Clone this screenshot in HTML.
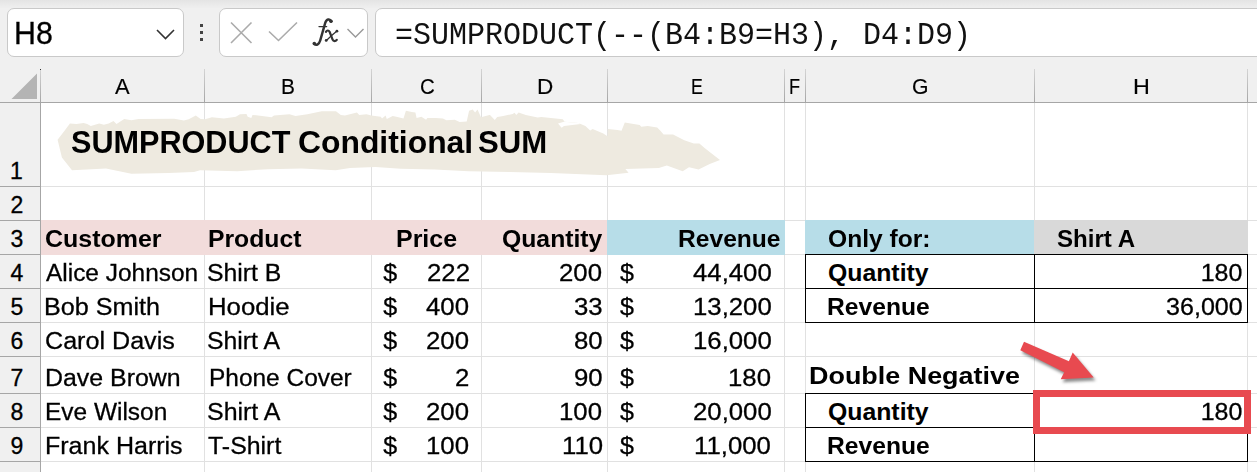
<!DOCTYPE html>
<html><head><meta charset="utf-8"><style>
html,body{margin:0;padding:0;}
body{width:1257px;height:472px;overflow:hidden;position:relative;background:#fff;font-family:'Liberation Sans', sans-serif;}
.t{position:absolute;white-space:nowrap;}
.r{position:absolute;}
.box{background:#fff;border:1px solid #c9c9c9;border-radius:7px;}
</style></head><body>
<div class="r" style="left:0px;top:0px;width:1257px;height:102px;background:#f0f0f0;"></div>
<div class="r" style="left:0px;top:0px;width:1257px;height:8px;background:linear-gradient(#e4e4e4,#efefef);"></div>
<div class="r" style="left:0px;top:102px;width:40px;height:370px;background:#f0f0f0;"></div>
<div class="r" style="left:204px;top:103px;width:1px;height:369px;background:#e1e1e1;"></div>
<div class="r" style="left:371px;top:103px;width:1px;height:369px;background:#e1e1e1;"></div>
<div class="r" style="left:481px;top:103px;width:1px;height:369px;background:#e1e1e1;"></div>
<div class="r" style="left:607px;top:103px;width:1px;height:369px;background:#e1e1e1;"></div>
<div class="r" style="left:784px;top:103px;width:1px;height:369px;background:#e1e1e1;"></div>
<div class="r" style="left:805px;top:103px;width:1px;height:369px;background:#e1e1e1;"></div>
<div class="r" style="left:1034px;top:103px;width:1px;height:369px;background:#e1e1e1;"></div>
<div class="r" style="left:1247px;top:103px;width:1px;height:369px;background:#e1e1e1;"></div>
<div class="r" style="left:41px;top:186px;width:1216px;height:1px;background:#e1e1e1;"></div>
<div class="r" style="left:41px;top:220px;width:1216px;height:1px;background:#e1e1e1;"></div>
<div class="r" style="left:41px;top:254px;width:1216px;height:1px;background:#e1e1e1;"></div>
<div class="r" style="left:41px;top:288px;width:1216px;height:1px;background:#e1e1e1;"></div>
<div class="r" style="left:41px;top:322px;width:1216px;height:1px;background:#e1e1e1;"></div>
<div class="r" style="left:41px;top:356px;width:1216px;height:1px;background:#e1e1e1;"></div>
<div class="r" style="left:41px;top:393px;width:1216px;height:1px;background:#e1e1e1;"></div>
<div class="r" style="left:41px;top:427px;width:1216px;height:1px;background:#e1e1e1;"></div>
<div class="r" style="left:41px;top:461px;width:1216px;height:1px;background:#e1e1e1;"></div>
<div class="r" style="left:41px;top:220px;width:566px;height:35px;background:#f2dcdb;"></div>
<div class="r" style="left:607px;top:220px;width:178px;height:35px;background:#b7dde8;"></div>
<div class="r" style="left:805px;top:220px;width:229px;height:34px;background:#b7dde8;"></div>
<div class="r" style="left:1034px;top:220px;width:214px;height:34px;background:#d9d9d9;"></div>
<div class="r" style="left:40px;top:69px;width:1px;height:33px;background:linear-gradient(#d4d4d4,#a6a6a6);"></div>
<div class="r" style="left:204px;top:69px;width:1px;height:33px;background:linear-gradient(#d4d4d4,#a6a6a6);"></div>
<div class="r" style="left:371px;top:69px;width:1px;height:33px;background:linear-gradient(#d4d4d4,#a6a6a6);"></div>
<div class="r" style="left:481px;top:69px;width:1px;height:33px;background:linear-gradient(#d4d4d4,#a6a6a6);"></div>
<div class="r" style="left:607px;top:69px;width:1px;height:33px;background:linear-gradient(#d4d4d4,#a6a6a6);"></div>
<div class="r" style="left:784px;top:69px;width:1px;height:33px;background:linear-gradient(#d4d4d4,#a6a6a6);"></div>
<div class="r" style="left:805px;top:69px;width:1px;height:33px;background:linear-gradient(#d4d4d4,#a6a6a6);"></div>
<div class="r" style="left:1034px;top:69px;width:1px;height:33px;background:linear-gradient(#d4d4d4,#a6a6a6);"></div>
<div class="r" style="left:1247px;top:69px;width:1px;height:33px;background:linear-gradient(#d4d4d4,#a6a6a6);"></div>
<div class="r" style="left:40px;top:102px;width:1px;height:370px;background:#a6a6a6;"></div>
<div class="r" style="left:0px;top:102px;width:1257px;height:1px;background:#a6a6a6;"></div>
<div class="r" style="left:0px;top:186px;width:40px;height:1px;background:#a6a6a6;"></div>
<div class="r" style="left:0px;top:220px;width:40px;height:1px;background:#a6a6a6;"></div>
<div class="r" style="left:0px;top:254px;width:40px;height:1px;background:#a6a6a6;"></div>
<div class="r" style="left:0px;top:288px;width:40px;height:1px;background:#a6a6a6;"></div>
<div class="r" style="left:0px;top:322px;width:40px;height:1px;background:#a6a6a6;"></div>
<div class="r" style="left:0px;top:356px;width:40px;height:1px;background:#a6a6a6;"></div>
<div class="r" style="left:0px;top:393px;width:40px;height:1px;background:#a6a6a6;"></div>
<div class="r" style="left:0px;top:427px;width:40px;height:1px;background:#a6a6a6;"></div>
<div class="r" style="left:0px;top:461px;width:40px;height:1px;background:#a6a6a6;"></div>
<div class="r" style="left:40px;top:69px;width:1px;height:1px;background:#333;"></div>
<svg class="r" style="left:0;top:60px" width="40" height="42"><polygon points="11.5,39 37,39 37,13.5" fill="#b4b4b4"/></svg>
<div class="r box" style="left:6.5px;top:8px;width:175px;height:47px;"></div>
<div class="r box" style="left:218.5px;top:8px;width:147px;height:47px;"></div>
<div class="r box" style="left:374.5px;top:8px;width:900px;height:47px;"></div>
<div class="r" style="left:199.5px;top:23.5px;width:3.5px;height:3.5px;background:#444;"></div>
<div class="r" style="left:199.5px;top:30.5px;width:3.5px;height:3.5px;background:#444;"></div>
<div class="r" style="left:199.5px;top:37.5px;width:3.5px;height:3.5px;background:#444;"></div>
<svg class="r" style="left:150px;top:20px" width="30" height="25"><polyline points="7,10 15.5,18.5 24,10" fill="none" stroke="#333" stroke-width="1.6"/></svg>
<svg class="r" style="left:225px;top:15px" width="150" height="35"><path d="M6,7.5 L26.5,28 M26.5,7.5 L6,28" stroke="#ababab" stroke-width="1.6" fill="none"/><polyline points="44,16.5 53.5,25.5 72,7.5" fill="none" stroke="#ababab" stroke-width="1.6"/><polyline points="122.5,14 130.5,22 138.5,14" fill="none" stroke="#999" stroke-width="1.4"/></svg>
<svg class="r" style="left:0;top:0" width="400" height="60"><g fill="none" stroke="#333" stroke-linecap="round">
<path d="M331.4,21.4 C329.8,18.4 326.4,18.9 325.2,23 L320.2,40.5 C319,44.5 316.5,45.6 314.2,44" stroke-width="2.5"/>
<path d="M319,26.6 L326.6,26.6" stroke-width="1.4"/>
<path d="M325.9,31.8 C326.9,30.2 328.6,30 329.6,31.8 L332.6,39.6 C333.4,41.6 335.6,41.4 336.8,39.8" stroke-width="2.2"/>
<path d="M337,31 C333,34 329.5,37.5 326.2,40.6" stroke-width="1.3"/>
</g><g fill="#333"><circle cx="330.9" cy="21.2" r="1.8"/><circle cx="314.3" cy="43.5" r="1.8"/><circle cx="336.9" cy="31.2" r="1.4"/><circle cx="326.2" cy="40.4" r="1.4"/></g></svg>
<div class="t" style="left:13.94px;top:19.03px;font-size:29.5px;line-height:29.5px;height:29.5px;font-weight:normal;color:#000;font-family:'Liberation Sans', sans-serif;-webkit-text-stroke:0.3px #000;transform:scale(1.0294,1.0800);transform-origin:0 24.97px;">H8</div>
<div class="t" style="left:395.00px;top:21.11px;font-size:30px;line-height:30px;height:30px;font-weight:normal;color:#111;font-family:'Liberation Mono', monospace;transform:scale(1.0000,1.0300);transform-origin:0 25.39px;">=SUMPRODUCT(--(B4:B9=H3), D4:D9)</div>
<div class="t" style="left:115.10px;top:76.04px;font-size:22.4px;line-height:22.4px;height:22.4px;font-weight:normal;color:#000;font-family:'Liberation Sans', sans-serif;-webkit-text-stroke:0.15px #000;transform:scale(0.9800,1.0000);transform-origin:0 18.96px;">A</div>
<div class="t" style="left:281.23px;top:76.04px;font-size:22.4px;line-height:22.4px;height:22.4px;font-weight:normal;color:#000;font-family:'Liberation Sans', sans-serif;-webkit-text-stroke:0.15px #000;transform:scale(0.9333,1.0000);transform-origin:0 18.96px;">B</div>
<div class="t" style="left:420.09px;top:76.04px;font-size:22.4px;line-height:22.4px;height:22.4px;font-weight:normal;color:#000;font-family:'Liberation Sans', sans-serif;-webkit-text-stroke:0.15px #000;transform:scale(0.9143,1.0000);transform-origin:0 18.96px;">C</div>
<div class="t" style="left:536.78px;top:76.04px;font-size:22.4px;line-height:22.4px;height:22.4px;font-weight:normal;color:#000;font-family:'Liberation Sans', sans-serif;-webkit-text-stroke:0.15px #000;transform:scale(1.0077,1.0000);transform-origin:0 18.96px;">D</div>
<div class="t" style="left:690.62px;top:76.04px;font-size:22.4px;line-height:22.4px;height:22.4px;font-weight:normal;color:#000;font-family:'Liberation Sans', sans-serif;-webkit-text-stroke:0.15px #000;transform:scale(0.7917,1.0000);transform-origin:0 18.96px;">E</div>
<div class="t" style="left:789.38px;top:76.04px;font-size:22.4px;line-height:22.4px;height:22.4px;font-weight:normal;color:#000;font-family:'Liberation Sans', sans-serif;-webkit-text-stroke:0.15px #000;transform:scale(0.8091,1.0000);transform-origin:0 18.96px;">F</div>
<div class="t" style="left:912.15px;top:76.04px;font-size:22.4px;line-height:22.4px;height:22.4px;font-weight:normal;color:#000;font-family:'Liberation Sans', sans-serif;-webkit-text-stroke:0.15px #000;transform:scale(0.9467,1.0000);transform-origin:0 18.96px;">G</div>
<div class="t" style="left:1132.72px;top:76.04px;font-size:22.4px;line-height:22.4px;height:22.4px;font-weight:normal;color:#000;font-family:'Liberation Sans', sans-serif;-webkit-text-stroke:0.15px #000;transform:scale(1.0417,1.0000);transform-origin:0 18.96px;">H</div>
<div class="t" style="left:10.00px;top:159.93px;font-size:23px;line-height:23px;height:23px;font-weight:normal;color:#000;font-family:'Liberation Sans', sans-serif;-webkit-text-stroke:0.3px #000;">1</div>
<div class="t" style="left:10.50px;top:193.93px;font-size:23px;line-height:23px;height:23px;font-weight:normal;color:#000;font-family:'Liberation Sans', sans-serif;-webkit-text-stroke:0.3px #000;">2</div>
<div class="t" style="left:10.50px;top:227.93px;font-size:23px;line-height:23px;height:23px;font-weight:normal;color:#000;font-family:'Liberation Sans', sans-serif;-webkit-text-stroke:0.3px #000;">3</div>
<div class="t" style="left:10.50px;top:261.93px;font-size:23px;line-height:23px;height:23px;font-weight:normal;color:#000;font-family:'Liberation Sans', sans-serif;-webkit-text-stroke:0.3px #000;">4</div>
<div class="t" style="left:10.50px;top:295.93px;font-size:23px;line-height:23px;height:23px;font-weight:normal;color:#000;font-family:'Liberation Sans', sans-serif;-webkit-text-stroke:0.3px #000;">5</div>
<div class="t" style="left:10.50px;top:329.93px;font-size:23px;line-height:23px;height:23px;font-weight:normal;color:#000;font-family:'Liberation Sans', sans-serif;-webkit-text-stroke:0.3px #000;">6</div>
<div class="t" style="left:10.50px;top:366.93px;font-size:23px;line-height:23px;height:23px;font-weight:normal;color:#000;font-family:'Liberation Sans', sans-serif;-webkit-text-stroke:0.3px #000;">7</div>
<div class="t" style="left:10.50px;top:400.93px;font-size:23px;line-height:23px;height:23px;font-weight:normal;color:#000;font-family:'Liberation Sans', sans-serif;-webkit-text-stroke:0.3px #000;">8</div>
<div class="t" style="left:10.50px;top:434.93px;font-size:23px;line-height:23px;height:23px;font-weight:normal;color:#000;font-family:'Liberation Sans', sans-serif;-webkit-text-stroke:0.3px #000;">9</div>
<svg class="r" style="left:0;top:0" width="1257" height="472"><polygon fill="#eeeae0" points="57.6,139.8 65.1,130 69.9,123.5 76.5,124.1 83.6,123.1 87.2,123.9 90.8,125.9 99.2,123.5 103.9,124.7 108.7,123.5 113.5,121.1 116.5,124.1 124.2,119.1 131.4,120.3 138.5,119.1 174.3,118.7 183.9,120.5 188.7,119.3 195.8,115.5 200.6,119.1 205,119.3 211.9,117.3 223.9,118.5 235.8,116.7 240,114.3 246.5,114.1 247.7,116.7 251.3,117.9 252.5,114.9 262,116.1 271.6,117.3 274,115.5 289.5,114.3 295.5,116.1 307.4,114.3 321.7,111.3 336,111.3 340.8,114.9 345,115.5 356.9,112.5 359.3,114.9 366.5,114.3 371.3,115.5 380.8,116.7 382,118.5 385.6,115.5 386.8,119.1 392.7,116.1 396.3,116.7 403.5,118.5 405.9,110.7 411.8,111.9 415.4,112.5 416.6,117.9 421.4,116.7 426.1,119.7 427.3,117.9 435.7,117.9 442.9,118.5 446.4,120.3 454.8,119.7 459.6,122.1 466.7,121.5 469.1,110.7 472.7,109.5 475.1,112.5 477.5,109.5 481,117.3 489.4,114.9 490,115.1 494.8,119.9 497.2,116.9 501.9,116.3 512.7,114 514.5,112.8 516.3,115.1 518.6,112.4 525.8,115.1 537.7,117.5 541.3,116.9 562.8,119.3 564.6,121.7 578.3,122.9 585.4,125.9 590.2,130.6 592.6,128.9 603.3,133.6 607.5,136.2 607.8,129 617.5,129.9 621.5,130.7 624.8,122.4 639.7,125.1 641.3,126.7 647.7,125.9 657.2,127.5 660.4,130.7 663.6,134.6 673.1,134.6 684.3,140.2 693.8,143.4 699.4,143.4 704.9,148.2 720,160.1 709.7,164.1 698.6,169.6 689,167.2 682.7,171.2 666.8,165.6 658.8,168 625.4,169.1 628.6,172.8 606.4,175.2 550.8,172.9 510,172.1 468.6,171.3 434.7,169.6 400.8,168.7 375.4,167 350,167.9 335.6,170.3 301.7,168.6 267.8,169.2 237.3,171.2 200,170.3 194,172 168.6,172.9 131.4,173.7 106,168.6 72,170.3 61.9,157.6"/><polygon fill="#fff" points="558,123.5 561.6,127.7 564,125.9 580.7,124.1 578.3,122.9 564,121.7"/></svg>
<div class="t" style="left:71.41px;top:128.24px;font-size:30.9px;line-height:30.9px;height:30.9px;font-weight:bold;color:#000;font-family:'Liberation Sans', sans-serif;transform:scale(0.9909,1.0000);transform-origin:0 26.16px;">SUMPRODUCT</div>
<div class="t" style="left:297.57px;top:128.24px;font-size:30.9px;line-height:30.9px;height:30.9px;font-weight:bold;color:#000;font-family:'Liberation Sans', sans-serif;transform:scale(1.0311,1.0000);transform-origin:0 26.16px;">Conditional</div>
<div class="t" style="left:477.89px;top:128.24px;font-size:30.9px;line-height:30.9px;height:30.9px;font-weight:bold;color:#000;font-family:'Liberation Sans', sans-serif;transform:scale(1.0091,1.0000);transform-origin:0 26.16px;">SUM</div>
<div class="t" style="left:45.19px;top:227.01px;font-size:24.8px;line-height:24.8px;height:24.8px;font-weight:bold;color:#000;font-family:'Liberation Sans', sans-serif;transform:scale(1.0070,1.0000);transform-origin:0 20.99px;">Customer</div>
<div class="t" style="left:208.31px;top:227.01px;font-size:24.8px;line-height:24.8px;height:24.8px;font-weight:bold;color:#000;font-family:'Liberation Sans', sans-serif;transform:scale(0.9967,1.0000);transform-origin:0 20.99px;">Product</div>
<div class="t" style="left:395.59px;top:227.01px;font-size:24.8px;line-height:24.8px;height:24.8px;font-weight:bold;color:#000;font-family:'Liberation Sans', sans-serif;transform:scale(1.0069,1.0000);transform-origin:0 20.99px;">Price</div>
<div class="t" style="left:502.40px;top:227.01px;font-size:24.8px;line-height:24.8px;height:24.8px;font-weight:bold;color:#000;font-family:'Liberation Sans', sans-serif;transform:scale(0.9980,1.0000);transform-origin:0 20.99px;">Quantity</div>
<div class="t" style="left:678.42px;top:227.01px;font-size:24.8px;line-height:24.8px;height:24.8px;font-weight:bold;color:#000;font-family:'Liberation Sans', sans-serif;transform:scale(0.9920,1.0000);transform-origin:0 20.99px;">Revenue</div>
<div class="t" style="left:828.21px;top:227.01px;font-size:24.8px;line-height:24.8px;height:24.8px;font-weight:bold;color:#000;font-family:'Liberation Sans', sans-serif;transform:scale(0.9920,1.0000);transform-origin:0 20.99px;">Only for:</div>
<div class="t" style="left:1056.83px;top:227.01px;font-size:24.8px;line-height:24.8px;height:24.8px;font-weight:bold;color:#000;font-family:'Liberation Sans', sans-serif;transform:scale(0.9709,1.0000);transform-origin:0 20.99px;">Shirt A</div>
<div class="t" style="left:45.90px;top:260.04px;font-size:25.0px;line-height:25.0px;height:25.0px;font-weight:normal;color:#000;font-family:'Liberation Sans', sans-serif;-webkit-text-stroke:0.3px #000;transform:scale(0.9773,0.9400);transform-origin:0 21.16px;">Alice Johnson</div>
<div class="t" style="left:207.32px;top:260.04px;font-size:25.0px;line-height:25.0px;height:25.0px;font-weight:normal;color:#000;font-family:'Liberation Sans', sans-serif;-webkit-text-stroke:0.3px #000;transform:scale(0.9917,0.9400);transform-origin:0 21.16px;">Shirt B</div>
<div class="t" style="left:383.30px;top:260.04px;font-size:25.0px;line-height:25.0px;height:25.0px;font-weight:normal;color:#000;font-family:'Liberation Sans', sans-serif;-webkit-text-stroke:0.3px #000;transform:scale(1.0000,0.9400);transform-origin:0 21.16px;">$</div>
<div class="t" style="left:426.80px;top:260.04px;font-size:25.0px;line-height:25.0px;height:25.0px;font-weight:normal;color:#000;font-family:'Liberation Sans', sans-serif;-webkit-text-stroke:0.3px #000;transform:scale(1.0300,0.9400);transform-origin:0 21.16px;">222</div>
<div class="t" style="left:559.47px;top:260.04px;font-size:25.0px;line-height:25.0px;height:25.0px;font-weight:normal;color:#000;font-family:'Liberation Sans', sans-serif;-webkit-text-stroke:0.3px #000;transform:scale(1.0300,0.9400);transform-origin:0 21.16px;">200</div>
<div class="t" style="left:620.00px;top:260.04px;font-size:25.0px;line-height:25.0px;height:25.0px;font-weight:normal;color:#000;font-family:'Liberation Sans', sans-serif;-webkit-text-stroke:0.3px #000;transform:scale(1.0000,0.9400);transform-origin:0 21.16px;">$</div>
<div class="t" style="left:693.05px;top:260.04px;font-size:25.0px;line-height:25.0px;height:25.0px;font-weight:normal;color:#000;font-family:'Liberation Sans', sans-serif;-webkit-text-stroke:0.3px #000;transform:scale(1.0300,0.9400);transform-origin:0 21.16px;">44,400</div>
<div class="t" style="left:43.89px;top:294.04px;font-size:25.0px;line-height:25.0px;height:25.0px;font-weight:normal;color:#000;font-family:'Liberation Sans', sans-serif;-webkit-text-stroke:0.3px #000;transform:scale(1.0062,0.9400);transform-origin:0 21.16px;">Bob Smith</div>
<div class="t" style="left:208.34px;top:294.04px;font-size:25.0px;line-height:25.0px;height:25.0px;font-weight:normal;color:#000;font-family:'Liberation Sans', sans-serif;-webkit-text-stroke:0.3px #000;transform:scale(1.0303,0.9400);transform-origin:0 21.16px;">Hoodie</div>
<div class="t" style="left:383.30px;top:294.04px;font-size:25.0px;line-height:25.0px;height:25.0px;font-weight:normal;color:#000;font-family:'Liberation Sans', sans-serif;-webkit-text-stroke:0.3px #000;transform:scale(1.0000,0.9400);transform-origin:0 21.16px;">$</div>
<div class="t" style="left:425.77px;top:294.04px;font-size:25.0px;line-height:25.0px;height:25.0px;font-weight:normal;color:#000;font-family:'Liberation Sans', sans-serif;-webkit-text-stroke:0.3px #000;transform:scale(1.0300,0.9400);transform-origin:0 21.16px;">400</div>
<div class="t" style="left:573.89px;top:294.04px;font-size:25.0px;line-height:25.0px;height:25.0px;font-weight:normal;color:#000;font-family:'Liberation Sans', sans-serif;-webkit-text-stroke:0.3px #000;transform:scale(1.0300,0.9400);transform-origin:0 21.16px;">33</div>
<div class="t" style="left:620.00px;top:294.04px;font-size:25.0px;line-height:25.0px;height:25.0px;font-weight:normal;color:#000;font-family:'Liberation Sans', sans-serif;-webkit-text-stroke:0.3px #000;transform:scale(1.0000,0.9400);transform-origin:0 21.16px;">$</div>
<div class="t" style="left:693.05px;top:294.04px;font-size:25.0px;line-height:25.0px;height:25.0px;font-weight:normal;color:#000;font-family:'Liberation Sans', sans-serif;-webkit-text-stroke:0.3px #000;transform:scale(1.0300,0.9400);transform-origin:0 21.16px;">13,200</div>
<div class="t" style="left:44.90px;top:328.04px;font-size:25.0px;line-height:25.0px;height:25.0px;font-weight:normal;color:#000;font-family:'Liberation Sans', sans-serif;-webkit-text-stroke:0.3px #000;transform:scale(1.0047,0.9400);transform-origin:0 21.16px;">Carol Davis</div>
<div class="t" style="left:207.32px;top:328.04px;font-size:25.0px;line-height:25.0px;height:25.0px;font-weight:normal;color:#000;font-family:'Liberation Sans', sans-serif;-webkit-text-stroke:0.3px #000;transform:scale(0.9917,0.9400);transform-origin:0 21.16px;">Shirt A</div>
<div class="t" style="left:383.30px;top:328.04px;font-size:25.0px;line-height:25.0px;height:25.0px;font-weight:normal;color:#000;font-family:'Liberation Sans', sans-serif;-webkit-text-stroke:0.3px #000;transform:scale(1.0000,0.9400);transform-origin:0 21.16px;">$</div>
<div class="t" style="left:425.77px;top:328.04px;font-size:25.0px;line-height:25.0px;height:25.0px;font-weight:normal;color:#000;font-family:'Liberation Sans', sans-serif;-webkit-text-stroke:0.3px #000;transform:scale(1.0300,0.9400);transform-origin:0 21.16px;">200</div>
<div class="t" style="left:573.89px;top:328.04px;font-size:25.0px;line-height:25.0px;height:25.0px;font-weight:normal;color:#000;font-family:'Liberation Sans', sans-serif;-webkit-text-stroke:0.3px #000;transform:scale(1.0300,0.9400);transform-origin:0 21.16px;">80</div>
<div class="t" style="left:620.00px;top:328.04px;font-size:25.0px;line-height:25.0px;height:25.0px;font-weight:normal;color:#000;font-family:'Liberation Sans', sans-serif;-webkit-text-stroke:0.3px #000;transform:scale(1.0000,0.9400);transform-origin:0 21.16px;">$</div>
<div class="t" style="left:693.05px;top:328.04px;font-size:25.0px;line-height:25.0px;height:25.0px;font-weight:normal;color:#000;font-family:'Liberation Sans', sans-serif;-webkit-text-stroke:0.3px #000;transform:scale(1.0300,0.9400);transform-origin:0 21.16px;">16,000</div>
<div class="t" style="left:44.51px;top:365.04px;font-size:25.0px;line-height:25.0px;height:25.0px;font-weight:normal;color:#000;font-family:'Liberation Sans', sans-serif;-webkit-text-stroke:0.3px #000;transform:scale(0.9962,0.9400);transform-origin:0 21.16px;">Dave Brown</div>
<div class="t" style="left:208.64px;top:365.04px;font-size:25.0px;line-height:25.0px;height:25.0px;font-weight:normal;color:#000;font-family:'Liberation Sans', sans-serif;-webkit-text-stroke:0.3px #000;transform:scale(0.9783,0.9400);transform-origin:0 21.16px;">Phone Cover</div>
<div class="t" style="left:383.30px;top:365.04px;font-size:25.0px;line-height:25.0px;height:25.0px;font-weight:normal;color:#000;font-family:'Liberation Sans', sans-serif;-webkit-text-stroke:0.3px #000;transform:scale(1.0000,0.9400);transform-origin:0 21.16px;">$</div>
<div class="t" style="left:454.61px;top:365.04px;font-size:25.0px;line-height:25.0px;height:25.0px;font-weight:normal;color:#000;font-family:'Liberation Sans', sans-serif;-webkit-text-stroke:0.3px #000;transform:scale(1.0300,0.9400);transform-origin:0 21.16px;">2</div>
<div class="t" style="left:573.89px;top:365.04px;font-size:25.0px;line-height:25.0px;height:25.0px;font-weight:normal;color:#000;font-family:'Liberation Sans', sans-serif;-webkit-text-stroke:0.3px #000;transform:scale(1.0300,0.9400);transform-origin:0 21.16px;">90</div>
<div class="t" style="left:620.00px;top:365.04px;font-size:25.0px;line-height:25.0px;height:25.0px;font-weight:normal;color:#000;font-family:'Liberation Sans', sans-serif;-webkit-text-stroke:0.3px #000;transform:scale(1.0000,0.9400);transform-origin:0 21.16px;">$</div>
<div class="t" style="left:728.07px;top:365.04px;font-size:25.0px;line-height:25.0px;height:25.0px;font-weight:normal;color:#000;font-family:'Liberation Sans', sans-serif;-webkit-text-stroke:0.3px #000;transform:scale(1.0300,0.9400);transform-origin:0 21.16px;">180</div>
<div class="t" style="left:44.54px;top:399.04px;font-size:25.0px;line-height:25.0px;height:25.0px;font-weight:normal;color:#000;font-family:'Liberation Sans', sans-serif;-webkit-text-stroke:0.3px #000;transform:scale(0.9779,0.9400);transform-origin:0 21.16px;">Eve Wilson</div>
<div class="t" style="left:207.31px;top:399.04px;font-size:25.0px;line-height:25.0px;height:25.0px;font-weight:normal;color:#000;font-family:'Liberation Sans', sans-serif;-webkit-text-stroke:0.3px #000;transform:scale(0.9972,0.9400);transform-origin:0 21.16px;">Shirt A</div>
<div class="t" style="left:383.30px;top:399.04px;font-size:25.0px;line-height:25.0px;height:25.0px;font-weight:normal;color:#000;font-family:'Liberation Sans', sans-serif;-webkit-text-stroke:0.3px #000;transform:scale(1.0000,0.9400);transform-origin:0 21.16px;">$</div>
<div class="t" style="left:425.77px;top:399.04px;font-size:25.0px;line-height:25.0px;height:25.0px;font-weight:normal;color:#000;font-family:'Liberation Sans', sans-serif;-webkit-text-stroke:0.3px #000;transform:scale(1.0300,0.9400);transform-origin:0 21.16px;">200</div>
<div class="t" style="left:559.47px;top:399.04px;font-size:25.0px;line-height:25.0px;height:25.0px;font-weight:normal;color:#000;font-family:'Liberation Sans', sans-serif;-webkit-text-stroke:0.3px #000;transform:scale(1.0300,0.9400);transform-origin:0 21.16px;">100</div>
<div class="t" style="left:620.00px;top:399.04px;font-size:25.0px;line-height:25.0px;height:25.0px;font-weight:normal;color:#000;font-family:'Liberation Sans', sans-serif;-webkit-text-stroke:0.3px #000;transform:scale(1.0000,0.9400);transform-origin:0 21.16px;">$</div>
<div class="t" style="left:693.05px;top:399.04px;font-size:25.0px;line-height:25.0px;height:25.0px;font-weight:normal;color:#000;font-family:'Liberation Sans', sans-serif;-webkit-text-stroke:0.3px #000;transform:scale(1.0300,0.9400);transform-origin:0 21.16px;">20,000</div>
<div class="t" style="left:44.50px;top:433.04px;font-size:25.0px;line-height:25.0px;height:25.0px;font-weight:normal;color:#000;font-family:'Liberation Sans', sans-serif;-webkit-text-stroke:0.3px #000;transform:scale(1.0007,0.9400);transform-origin:0 21.16px;">Frank Harris</div>
<div class="t" style="left:207.80px;top:433.04px;font-size:25.0px;line-height:25.0px;height:25.0px;font-weight:normal;color:#000;font-family:'Liberation Sans', sans-serif;-webkit-text-stroke:0.3px #000;transform:scale(0.9959,0.9400);transform-origin:0 21.16px;">T-Shirt</div>
<div class="t" style="left:383.30px;top:433.04px;font-size:25.0px;line-height:25.0px;height:25.0px;font-weight:normal;color:#000;font-family:'Liberation Sans', sans-serif;-webkit-text-stroke:0.3px #000;transform:scale(1.0000,0.9400);transform-origin:0 21.16px;">$</div>
<div class="t" style="left:425.77px;top:433.04px;font-size:25.0px;line-height:25.0px;height:25.0px;font-weight:normal;color:#000;font-family:'Liberation Sans', sans-serif;-webkit-text-stroke:0.3px #000;transform:scale(1.0300,0.9400);transform-origin:0 21.16px;">100</div>
<div class="t" style="left:561.53px;top:433.04px;font-size:25.0px;line-height:25.0px;height:25.0px;font-weight:normal;color:#000;font-family:'Liberation Sans', sans-serif;-webkit-text-stroke:0.3px #000;transform:scale(1.0300,0.9400);transform-origin:0 21.16px;">110</div>
<div class="t" style="left:620.00px;top:433.04px;font-size:25.0px;line-height:25.0px;height:25.0px;font-weight:normal;color:#000;font-family:'Liberation Sans', sans-serif;-webkit-text-stroke:0.3px #000;transform:scale(1.0000,0.9400);transform-origin:0 21.16px;">$</div>
<div class="t" style="left:694.08px;top:433.04px;font-size:25.0px;line-height:25.0px;height:25.0px;font-weight:normal;color:#000;font-family:'Liberation Sans', sans-serif;-webkit-text-stroke:0.3px #000;transform:scale(1.0300,0.9400);transform-origin:0 21.16px;">11,000</div>
<div class="t" style="left:828.00px;top:260.51px;font-size:24.8px;line-height:24.8px;height:24.8px;font-weight:bold;color:#000;font-family:'Liberation Sans', sans-serif;">Quantity</div>
<div class="t" style="left:827.01px;top:294.51px;font-size:24.8px;line-height:24.8px;height:24.8px;font-weight:bold;color:#000;font-family:'Liberation Sans', sans-serif;transform:scale(0.9940,1.0000);transform-origin:0 20.99px;">Revenue</div>
<div class="t" style="left:1200.70px;top:260.04px;font-size:25.0px;line-height:25.0px;height:25.0px;font-weight:normal;color:#000;font-family:'Liberation Sans', sans-serif;-webkit-text-stroke:0.3px #000;transform:scale(1.0000,0.9400);transform-origin:0 21.16px;">180</div>
<div class="t" style="left:1166.40px;top:294.04px;font-size:25.0px;line-height:25.0px;height:25.0px;font-weight:normal;color:#000;font-family:'Liberation Sans', sans-serif;-webkit-text-stroke:0.3px #000;transform:scale(1.0041,0.9400);transform-origin:0 21.16px;">36,000</div>
<div class="t" style="left:809.40px;top:362.23px;font-size:26.9px;line-height:26.9px;height:26.9px;font-weight:bold;color:#000;font-family:'Liberation Sans', sans-serif;transform:scale(1.0010,0.9200);transform-origin:0 22.77px;">Double Negative</div>
<div class="t" style="left:828.00px;top:399.51px;font-size:24.8px;line-height:24.8px;height:24.8px;font-weight:bold;color:#000;font-family:'Liberation Sans', sans-serif;">Quantity</div>
<div class="t" style="left:827.01px;top:433.51px;font-size:24.8px;line-height:24.8px;height:24.8px;font-weight:bold;color:#000;font-family:'Liberation Sans', sans-serif;transform:scale(0.9940,1.0000);transform-origin:0 20.99px;">Revenue</div>
<div class="t" style="left:1200.70px;top:399.04px;font-size:25.0px;line-height:25.0px;height:25.0px;font-weight:normal;color:#000;font-family:'Liberation Sans', sans-serif;-webkit-text-stroke:0.3px #000;transform:scale(1.0000,0.9400);transform-origin:0 21.16px;">180</div>
<div class="r" style="left:805px;top:254px;width:443px;height:1px;background:#000;"></div>
<div class="r" style="left:805px;top:322px;width:443px;height:1px;background:#000;"></div>
<div class="r" style="left:805px;top:288px;width:443px;height:1px;background:#000;"></div>
<div class="r" style="left:805px;top:254px;width:1px;height:69px;background:#000;"></div>
<div class="r" style="left:1247px;top:254px;width:1px;height:69px;background:#000;"></div>
<div class="r" style="left:1034px;top:254px;width:1px;height:69px;background:#000;"></div>
<div class="r" style="left:805px;top:393px;width:443px;height:1px;background:#000;"></div>
<div class="r" style="left:805px;top:461px;width:443px;height:1px;background:#000;"></div>
<div class="r" style="left:805px;top:427px;width:443px;height:1px;background:#000;"></div>
<div class="r" style="left:805px;top:393px;width:1px;height:69px;background:#000;"></div>
<div class="r" style="left:1247px;top:393px;width:1px;height:69px;background:#000;"></div>
<div class="r" style="left:1034px;top:393px;width:1px;height:69px;background:#000;"></div>
<div class="r" style="left:1033px;top:390px;width:218px;height:44px;box-sizing:border-box;border:7px solid #e84a50;"></div>
<svg class="r" style="left:0;top:0" width="1257" height="472"><defs><filter id="sh" x="-30%" y="-30%" width="160%" height="160%"><feGaussianBlur stdDeviation="1.6"/></filter></defs>
<polygon transform="translate(2,3)" filter="url(#sh)" fill="rgba(0,0,0,0.45)" points="1024,341.8 1020.3,350.2 1064.2,372.3 1060.7,379.3 1093.7,377.5 1072.7,352.5 1068.9,361.2"/>
<polygon fill="#e84a50" points="1024,341.8 1020.3,350.2 1064.2,372.3 1060.7,379.3 1093.7,377.5 1072.7,352.5 1068.9,361.2"/></svg>
</body></html>
